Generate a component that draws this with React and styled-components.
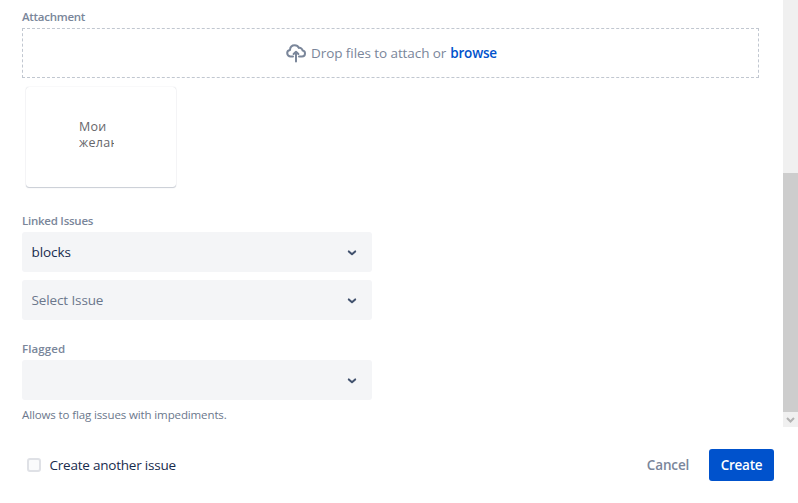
import React from "react";
import styled, { createGlobalStyle } from "styled-components";

const GlobalStyle = createGlobalStyle`
  * { box-sizing: border-box; }
  body { margin: 0; background: #fff; overflow: hidden; }
  button { font-family: inherit; }
`;

const Dialog = styled.div`
  display: flex;
  flex-direction: column;
  width: 798px;
  height: 503px;
  background: #fff;
  color: #172b4d;
  font-family: "Open Sans", "Noto Sans", sans-serif;
  font-size: 13.5px;
`;

const Body = styled.div`
  display: flex;
  height: 427px;
`;

const Form = styled.div`
  flex: 1;
  padding: 9px 24px 0 22px;
`;

const Label = styled.div`
  height: 16px;
  margin-bottom: 3px;
  color: #7a869a;
  font-size: 11.5px;
  font-weight: 600;
  line-height: 16px;
  letter-spacing: ${(p) => p.$track || 0}px;
  white-space: nowrap;
`;

const Text = styled.span`
  letter-spacing: ${(p) => p.$track || 0}px;
  white-space: nowrap;
`;

const DropZone = styled.div`
  display: flex;
  align-items: center;
  justify-content: center;
  width: 737px;
  height: 50px;
  padding-left: 2px;
  border: 1px dashed #c1c7d0;
  color: #7a869a;
`;

const CloudIcon = styled.svg`
  width: 20px;
  height: 19px;
  margin-right: 5px;
`;

const Browse = styled.span`
  margin-left: 0.6px;
  color: #0052cc;
  font-weight: 600;
  letter-spacing: -0.2px;
`;

const FileCard = styled.div`
  width: 150px;
  height: 100px;
  margin: 9px 0 26px 4px;
  padding: 32px 0 0 53px;
  border-radius: 3px;
  box-shadow: 0 1px 1px rgba(9, 30, 66, 0.2), 0 0 1px rgba(9, 30, 66, 0.25);
`;

const Preview = styled.div`
  width: 35px;
  overflow: hidden;
  color: #66666b;
  font-size: 12.5px;
  line-height: 16px;
  letter-spacing: 0.3px;
  white-space: nowrap;
`;

const Select = styled.div`
  display: flex;
  align-items: center;
  justify-content: space-between;
  width: 350px;
  height: 40px;
  margin-bottom: 8px;
  padding: 0 14px 0 9.5px;
  border-radius: 3px;
  background: #f4f5f7;
  color: ${(p) => (p.$placeholder ? "#6b778c" : "#172b4d")};
`;

const Chevron = styled.svg`
  width: 12px;
  height: 8px;
  margin-top: 1px;
`;

const Group = styled.div`
  margin-bottom: 21px;
`;

const Hint = styled.div`
  margin-top: -1px;
  color: #6b778c;
  font-size: 11.5px;
  line-height: 16px;
`;

const Scrollbar = styled.div`
  display: flex;
  flex-direction: column;
  justify-content: flex-end;
  width: 15px;
  background: #f0f0f0;
`;

const Thumb = styled.div`
  height: 239px;
  background: #cdcdcd;
`;

const ScrollArrow = styled.svg`
  width: 15px;
  height: 15px;
`;

const Footer = styled.div`
  display: flex;
  align-items: center;
  height: 76px;
  padding: 0 24px 0 27px;
`;

const Checkbox = styled.div`
  width: 14px;
  height: 14px;
  margin-right: 8.5px;
  border: 2px solid #dfe1e6;
  border-radius: 3px;
  background: #fafbfc;
`;

const Actions = styled.div`
  display: flex;
  margin-left: auto;
`;

const Button = styled.button`
  width: ${(p) => (p.$primary ? 65 : 82)}px;
  height: 32px;
  padding: 0;
  border: 0;
  border-radius: 3px;
  background: ${(p) => (p.$primary ? "#0052cc" : "transparent")};
  color: ${(p) => (p.$primary ? "#fff" : "#7a869a")};
  font-size: 13.5px;
  font-weight: 600;
`;

const DownChevron = () => (
  <Chevron viewBox="0 0 12 8">
    <path d="M2.8 2.4 6 5.3l3.2-2.9" fill="none" stroke="#42526e" strokeWidth="2" strokeLinecap="round" strokeLinejoin="round" />
  </Chevron>
);

const Field = ({ children, placeholder, track }) => (
  <Select $placeholder={placeholder}>
    <Text $track={track}>{children}</Text>
    <DownChevron />
  </Select>
);

export default function App() {
  return (
    <>
      <GlobalStyle />
      <Dialog>
        <Body>
          <Form>
            <Label $track={-0.28}>Attachment</Label>
            <DropZone>
              <CloudIcon viewBox="0 0 20 19">
                <g fill="none" stroke="#7a869a" strokeWidth="2" strokeLinecap="round" strokeLinejoin="round">
                  <path d="M7 12.5H4.600A3.400 3.400 0 0 1 1.200 9.100C1.200 7.400 2.400 6.100 4 5.900 4.200 3.200 6.200 1.300 8.700 1.300c1.900 0 3.400 1 4.100 2.600 2-.4 3.600 1 3.800 2.700 1.400.2 2.400 1.300 2.400 2.900 0 1.700-1.300 3-3 3h-3" />
                  <path d="M10 17.500V8M7.600 10 10 7.700l2.400 2.300" />
                </g>
              </CloudIcon>
              <Text $track={-0.08}>
                Drop files to attach or <Browse>browse</Browse>
              </Text>
            </DropZone>
            <FileCard>
              <Preview>
                Мои
                <br />
                желан
              </Preview>
            </FileCard>
            <Group>
              <Label $track={-0.25}>Linked Issues</Label>
              <Field track={-0.08}>blocks</Field>
              <Field placeholder track={-0.12}>Select Issue</Field>
            </Group>
            <Label $track={0.1}>Flagged</Label>
            <Field />
            <Hint>
              <Text $track={-0.12}>Allows to flag issues with impediments.</Text>
            </Hint>
          </Form>
          <Scrollbar>
            <Thumb />
            <ScrollArrow viewBox="0 0 15 15">
              <path d="M4 6l3.5 3.5L11 6" fill="none" stroke="#b3b3b3" strokeWidth="2" />
            </ScrollArrow>
          </Scrollbar>
        </Body>
        <Footer>
          <Checkbox />
          <Text $track={-0.22}>Create another issue</Text>
          <Actions>
            <Button>
              <Text $track={-0.15}>Cancel</Text>
            </Button>
            <Button $primary>
              <Text $track={-0.25}>Create</Text>
            </Button>
          </Actions>
        </Footer>
      </Dialog>
    </>
  );
}
